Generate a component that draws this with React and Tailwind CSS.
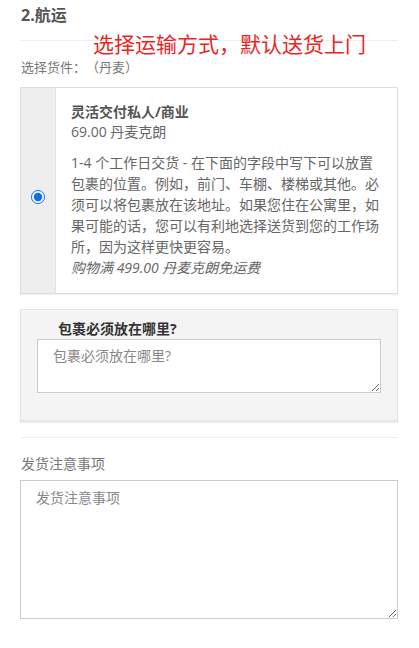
import React from 'react';

const font = { fontFamily: '"Open Sans", "Noto Sans CJK SC", sans-serif' };

const App = () => {
  return (
    <div className="relative min-h-[648px] bg-white pl-5 pr-[21px] text-[14px] text-[#666] [text-spacing-trim:space-all]" style={font}>
      {/* annotation over the page */}
      <p className="absolute left-[93px] top-[31px] text-[21px] leading-[26px] text-[#e8251f]">
        选择运输方式，默认送货上门
      </p>

      <h3 className="pt-[5px] pl-px text-[16px] font-bold leading-5 text-[#555]">2.航运</h3>
      <div className="mt-[15px] ml-px border-t border-[#eee]"></div>

      <p className="mt-[16px] pl-px text-[13px] leading-5 text-[#777]">选择货件：（丹麦）</p>

      <div className="mt-[10px] flex h-[207px] border border-[#ddd] shadow-[0_1px_1px_rgba(0,0,0,0.06)]">
        <div className="flex w-[35px] shrink-0 items-center justify-center border-r border-[#e2e2e2] bg-[#eee]">
          <input type="radio" defaultChecked className="mt-[13px] h-[14px] w-[14px] accent-[#0b6ff0]" />
        </div>
        <div className="flex-1 pt-[14px] pr-[14px] pl-[15px]">
          <p className="font-bold leading-5 text-[#555]">灵活交付私人/商业</p>
          <p className="leading-5">69.00 丹麦克朗</p>
          <p className="mt-[10px] leading-[21px]">
            1-4 个工作日交货 - 在下面的字段中写下可以放置包裹的位置。例如，前门、车棚、楼梯或其他。必须可以将包裹放在该地址。如果您住在公寓里，如果可能的话，您可以有利地选择送货到您的工作场所，因为这样更快更容易。
          </p>
          <p className="italic leading-[21px]">购物满 499.00 丹麦克朗免运费</p>
        </div>
      </div>

      <div className="mt-[15px] h-[112px] border border-[#e2e2e2] bg-[#f4f4f4] pt-[9px] pr-4 pl-4 shadow-[0_2px_1px_rgba(0,0,0,0.08)]">
        <p className="pl-[21px] font-bold leading-5 text-[#333]">包裹必须放在哪里?</p>
        <textarea
          placeholder="包裹必须放在哪里?"
          className="block h-[54px] w-full border border-[#ccc] bg-white px-[15px] py-[6px] leading-5 text-[#555] placeholder:text-[#888]"
        ></textarea>
      </div>

      <div className="mt-[16px] border-t border-[#eee]"></div>

      <p className="mt-[16px] pl-px leading-5 text-[#777]">发货注意事项</p>
      <textarea
        placeholder="发货注意事项"
        className="mt-[6px] block h-[139px] w-full border border-[#ccc] bg-white px-[15px] py-[7px] leading-5 text-[#555] placeholder:text-[#888]"
      ></textarea>
    </div>
  );
};

export default App;
